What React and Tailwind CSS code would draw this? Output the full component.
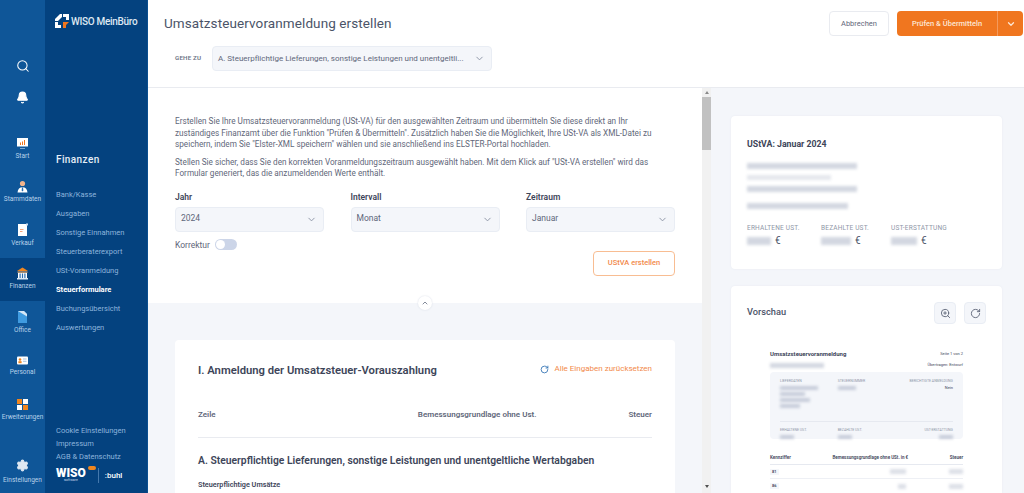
import { Search, Bell, ChevronDown, ChevronUp, ZoomIn, RotateCw, Settings } from 'lucide-react';

const railItems = [
  { label: 'Start', icon: 'start' },
  { label: 'Stammdaten', icon: 'person' },
  { label: 'Verkauf', icon: 'doc' },
  { label: 'Finanzen', icon: 'bank', active: true },
  { label: 'Office', icon: 'office' },
  { label: 'Personal', icon: 'card' },
  { label: 'Erweiterungen', icon: 'grid' },
];

const financeLinks = [
  'Bank/Kasse',
  'Ausgaben',
  'Sonstige Einnahmen',
  'Steuerberaterexport',
  'USt-Voranmeldung',
  'Steuerformulare',
  'Buchungsübersicht',
  'Auswertungen',
];

const RailIcon = ({ type }) => {
  if (type === 'start') {
    return (
      <svg width="13" height="13" viewBox="0 0 13 13">
        <rect x="1" y="1" width="11" height="8.5" fill="#fff" />
        <rect x="4" y="5.5" width="1" height="2.5" fill="#f0761f" />
        <rect x="6" y="4.5" width="1" height="3.5" fill="#f0761f" />
        <rect x="8" y="3" width="1" height="5" fill="#f0761f" />
        <rect x="4" y="11" width="5" height="1" fill="#7fa6cf" />
      </svg>
    );
  }
  if (type === 'person') {
    return (
      <svg width="13" height="13" viewBox="0 0 13 13">
        <circle cx="6.5" cy="3.5" r="2.6" fill="#f2b48c" />
        <path d="M1.5 12.5c.3-3.6 2.2-5.3 5-5.3s4.7 1.700 5 5.300z" fill="#fff" />
        <path d="M6 7.500h1l.4 3-.9 1-.9-1z" fill="#2a6db0" />
      </svg>
    );
  }
  if (type === 'doc') {
    return (
      <svg width="13" height="14" viewBox="0 0 13 14">
        <path d="M2 1h8l1 1v11H2z" fill="#fff" />
        <rect x="10" y="0.500" width="2" height="2" fill="#cfe0f2" />
        <rect x="4" y="6" width="3.500" height="1" fill="#f4a27a" />
        <rect x="4" y="8" width="2.500" height="1" fill="#f4a27a" />
      </svg>
    );
  }
  if (type === 'bank') {
    return (
      <svg width="13" height="13" viewBox="0 0 13 13">
        <path d="M6.500 0.500 12 4H1z" fill="#f0861f" />
        <rect x="1.500" y="4.500" width="10" height="1.200" fill="#f0b070" />
        <rect x="2" y="6" width="9" height="5" fill="#fff" />
        <rect x="3.500" y="6.500" width="1.200" height="4.500" fill="#2a6db0" />
        <rect x="5.900" y="6.500" width="1.200" height="4.500" fill="#2a6db0" />
        <rect x="8.300" y="6.500" width="1.200" height="4.500" fill="#2a6db0" />
        <rect x="1" y="11" width="11" height="1.500" fill="#dce8f4" />
      </svg>
    );
  }
  if (type === 'office') {
    return (
      <svg width="13" height="14" viewBox="0 0 13 14">
        <path d="M2 1h6l3 3v9H2z" fill="#3f9be0" />
        <path d="M2 1h6l3 3v2.500z" fill="#d6e7f6" />
      </svg>
    );
  }
  if (type === 'card') {
    return (
      <svg width="13" height="11" viewBox="0 0 13 11">
        <rect x="1" y="1.500" width="11" height="8" rx="1" fill="#fff" />
        <circle cx="4" cy="4.500" r="1.300" fill="#f0861f" />
        <rect x="2.400" y="6.200" width="3.200" height="2" fill="#f0861f" />
        <rect x="7" y="3.500" width="3.500" height="1" fill="#a9c4e0" />
        <rect x="7" y="5.800" width="3.500" height="1" fill="#a9c4e0" />
      </svg>
    );
  }
  return (
    <svg width="13" height="13" viewBox="0 0 13 13">
      <rect x="1" y="1" width="5" height="5" fill="#f0861f" />
      <rect x="7" y="1" width="5" height="5" fill="#fff" />
      <rect x="1" y="7" width="5" height="5" fill="#fff" />
      <rect x="7" y="7" width="5" height="5" fill="#f0861f" />
    </svg>
  );
};

const BrandMark = () => (
  <svg width="14" height="14" viewBox="0 0 14 14">
    <path d="M0 5 5 0h2v3L3 7H0z" fill="#fff" />
    <path d="M8 0h6v6h-3V3H8z" fill="#fff" />
    <path d="M0 8h3v3h3v3H0z" fill="#fff" />
    <path d="M8 8h6l-3 3v3H8z" fill="#f0761f" />
  </svg>
);

const Redacted = ({ className }) => <div className={`bg-[#a9b1c4] blur-[1.5px] ${className}`} />;

const SelectBox = ({ value, className = '' }) => (
  <div className={`flex h-[25px] items-center justify-between rounded-sm border border-[#e9edf4] bg-[#f4f6fa] pl-[5px] pr-[6px] text-[#5f677a] ${className}`}>
    <span className="whitespace-nowrap">{value}</span>
    <ChevronDown size={11} className="ml-2 shrink-0 text-[#8a92a3]" />
  </div>
);

const Field = ({ label, value }) => (
  <div className="w-[149px]">
    <div className="mb-[4px] mt-[1px] text-[8.500px] font-semibold leading-[11px] text-[#3d4559]">{label}</div>
    <SelectBox value={value} className="text-[8.500px]" />
  </div>
);

const Stat = ({ label, barWidth, className }) => (
  <div className={className}>
    <div className="text-[6.500px] leading-[10px] tracking-[0.2px] text-[#8f97a8]">{label}</div>
    <div className="mt-[3px] flex items-center gap-[4px] text-[10px] leading-[10px] text-[#4b5468]">
      <Redacted className={`h-[8px] opacity-50 ${barWidth}`} />
      €
    </div>
  </div>
);

const PreviewDoc = () => (
  <div className="ml-[39px] w-[193px] text-[#3d4559]">
    <div className="flex items-center justify-between">
      <span className="text-[6px] font-bold leading-[8px]">Umsatzsteuervoranmeldung</span>
      <span className="text-[4px] leading-[8px]">Seite 1 von 2</span>
    </div>
    <div className="mt-[3px] flex items-center justify-between">
      <Redacted className="h-[5px] w-[54px] opacity-50" />
      <span className="text-[4px] leading-[8px]">Übertragen: Entwurf</span>
    </div>
    <div className="mt-[3px] h-[67px] rounded-sm bg-[#f4f6fa] px-[10px] pt-[7px]">
      <div className="grid h-[43px] grid-cols-3 border-b border-[#e6e9f0] text-[3.500px] leading-[5px] text-[#8f97a8]">
        <div>
          LIEFERDATEN
          <Redacted className="mt-[2px] h-[4px] w-[38px] opacity-60" />
          <Redacted className="mt-[2px] h-[4px] w-[25px] opacity-60" />
          <Redacted className="mt-[2px] h-[4px] w-[30px] opacity-60" />
          <Redacted className="mt-[2px] h-[4px] w-[20px] opacity-60" />
        </div>
        <div>
          STEUERNUMMER
          <Redacted className="mt-[2px] h-[4px] w-[18px] opacity-60" />
        </div>
        <div className="text-right">
          BERICHTIGTE ANMELDUNG
          <div className="mt-[1px] text-[4px] text-[#3d4559]">Nein</div>
        </div>
      </div>
      <div className="grid grid-cols-3 pt-[6px] text-[3.500px] leading-[5px] text-[#8f97a8]">
        <div>
          ERHALTENE UST.
          <Redacted className="mt-[2px] h-[4px] w-[14px] opacity-60" />
        </div>
        <div>
          BEZAHLTE UST.
          <Redacted className="mt-[2px] h-[4px] w-[14px] opacity-60" />
        </div>
        <div className="flex flex-col items-end">
          UST-ERSTATTUNG
          <Redacted className="mt-[2px] h-[4px] w-[14px] opacity-60" />
        </div>
      </div>
    </div>
    <div className="mt-[15px] flex justify-between border-b border-[#e6e9f0] pb-[2px] text-[4.500px] font-semibold leading-[8px]">
      <span>Kennziffer</span>
      <span>Bemessungsgrundlage ohne USt. in €</span>
      <span>Steuer</span>
    </div>
    <div className="flex h-[14px] items-center justify-between border-b border-[#eef0f5]">
      <span className="bg-[#f4f6fa] px-[2px] text-[4px] font-semibold">81</span>
      <Redacted className="ml-[68px] h-[5px] w-[16px] opacity-40" />
      <Redacted className="h-[5px] w-[14px] opacity-40" />
    </div>
    <div className="flex h-[14px] items-center justify-between">
      <span className="bg-[#f4f6fa] px-[2px] text-[4px] font-semibold">86</span>
      <Redacted className="ml-[76px] h-[5px] w-[8px] opacity-40" />
      <Redacted className="h-[5px] w-[14px] opacity-40" />
    </div>
  </div>
);

const App = () => {
  return (
    <div className="flex h-screen overflow-hidden bg-white font-['Roboto',sans-serif] text-[#4b5468]">
      {/* icon rail */}
      <aside className="flex w-[45px] shrink-0 flex-col items-center bg-[#0f5698] text-[#b9d2ea]">
        <Search size={14} strokeWidth={1.800} className="mt-[59px] text-white" />
        <Bell size={13} fill="#fff" className="mt-[18px] text-white" />
        <nav className="mt-[23px] flex w-full flex-col">
          {railItems.map((item) => (
            <div
              key={item.label}
              className={`flex h-[43.500px] flex-col items-center justify-center gap-[1px] ${item.active ? 'bg-[#04427f]' : ''}`}
            >
              <RailIcon type={item.icon} />
              <span className="whitespace-nowrap text-[6.500px] leading-[10px]">{item.label}</span>
            </div>
          ))}
        </nav>
        <div className="mt-auto flex flex-col items-center pb-[8px]">
          <Settings size={13} fill="#dfe8f2" className="text-[#dfe8f2]" />
          <span className="mt-[3px] whitespace-nowrap text-[6.500px] leading-[10px]">Einstellungen</span>
        </div>
      </aside>

      {/* section sidebar */}
      <aside className="flex w-[103px] shrink-0 flex-col border-r-[1px] border-[#0b4f90] bg-[#04427f] pl-[11px] text-[#8db4dc]">
        <div className="-ml-px mt-[14px] flex h-[14px] items-center gap-[2px]">
          <BrandMark />
          <span className="whitespace-nowrap text-[10px] font-medium tracking-[-0.3px] text-[#dfe8f2]">WISO MeinBüro</span>
        </div>
        <div className="mt-[124px] text-[10px] font-medium leading-[16px] tracking-[0.4px] text-[#e6eef7]">Finanzen</div>
        <ul className="mt-[17px] flex flex-col">
          {financeLinks.map((link) => (
            <li
              key={link}
              className={`whitespace-nowrap text-[7.500px] leading-[19px] ${link === 'Steuerformulare' ? 'font-bold text-white' : ''}`}
            >
              {link}
            </li>
          ))}
        </ul>
        <div className="mt-auto text-[7.500px] leading-[13px]">
          <div>Cookie Einstellungen</div>
          <div>Impressum</div>
          <div>AGB &amp; Datenschutz</div>
        </div>
        <div className="mb-[9px] mt-[4px] flex h-[17px] items-center text-white">
          <div className="relative flex flex-col items-center leading-none">
            <span className="text-[12px] font-black leading-[10px]">WISO</span>
            <span className="text-[3.500px] leading-[5px] text-[#c9dbee]">software</span>
            <span className="absolute left-[32px] top-[-2px] h-[4px] w-[8px] rounded-sm bg-[#f0861f]" />
          </div>
          <span className="ml-[12px] mr-[6px] h-[15px] w-px bg-[#4478ad]" />
          <span className="text-[8px] font-medium">:buhl</span>
        </div>
      </aside>

      {/* main */}
      <main className="flex min-w-0 flex-1 flex-col">
        <header className="h-[88px] shrink-0 border-b border-[#e9ebf0] bg-white pl-[16px] pr-[1px]">
          <div className="flex items-start justify-between pt-[11px]">
            <h1 className="mt-[2px] text-[13.500px] leading-[20px] tracking-[0.1px] text-[#4b5468]">Umsatzsteuervoranmeldung erstellen</h1>
            <div className="flex gap-[8px]">
              <button className="h-[25px] w-[60px] rounded-sm border border-[#e9ebf0] bg-white text-[7.500px] text-[#5f677a]">Abbrechen</button>
              <div className="flex h-[25px] w-[126px] items-center rounded-sm bg-[#f0761f] text-[7.500px] font-medium text-[#fde6d4]">
                <span className="w-[101px] border-r border-[#f49a5c] text-center leading-[25px]">Prüfen &amp; Übermitteln</span>
                <ChevronDown size={10} strokeWidth={3} className="ml-[8px]" />
              </div>
            </div>
          </div>
          <div className="mt-[10px] flex items-center pl-[11px]">
            <span className="w-[37px] text-[6.200px] font-semibold tracking-[0.2px] text-[#6b7385]">GEHE ZU</span>
            <SelectBox value="A. Steuerpflichtige Lieferungen, sonstige Leistungen und unentgeltli..." className="w-[280px] text-[8px]" />
          </div>
        </header>

        <div className="flex min-h-0 flex-1">
          {/* form column */}
          <section className="flex min-w-0 flex-1 flex-col overflow-hidden bg-[#f4f6fa]">
            <div className="relative h-[215px] shrink-0 bg-white pl-[27px] pr-[27px] pt-[28px] text-[8.200px] leading-[11.500px] text-[#5f677a]">
              <p className="whitespace-nowrap">
                Erstellen Sie Ihre Umsatzsteuervoranmeldung (USt-VA) für den ausgewählten Zeitraum und übermitteln Sie diese direkt an Ihr
                <br />
                zuständiges Finanzamt über die Funktion "Prüfen &amp; Übermitteln". Zusätzlich haben Sie die Möglichkeit, Ihre USt-VA als XML-Datei zu
                <br />
                speichern, indem Sie "Elster-XML speichern" wählen und sie anschließend ins ELSTER-Portal hochladen.
              </p>
              <p className="mt-[6px] whitespace-nowrap">
                Stellen Sie sicher, dass Sie den korrekten Voranmeldungszeitraum ausgewählt haben. Mit dem Klick auf "USt-VA erstellen" wird das
                <br />
                Formular generiert, das die anzumeldenden Werte enthält.
              </p>
              <div className="mt-[11px] flex justify-between">
                <Field label="Jahr" value="2024" />
                <Field label="Intervall" value="Monat" />
                <Field label="Zeitraum" value="Januar" />
              </div>
              <div className="mt-[7px] flex items-center gap-[5px] text-[8.500px] leading-[12px]">
                Korrektur
                <span className="flex h-[11px] w-[22px] items-center rounded-full bg-[#ccd5e8] pl-px">
                  <span className="h-[9px] w-[9px] rounded-full bg-white" />
                </span>
              </div>
              <div className="flex justify-end">
                <button className="h-[25px] w-[82px] rounded-sm border border-[#f8bd92] bg-white text-[7.500px] font-medium text-[#f28a4b]">UStVA erstellen</button>
              </div>
              <span className="absolute bottom-[-7px] left-[270px] flex h-[14px] w-[14px] items-center justify-center rounded-full bg-white shadow-[0_0_2px_#d7dbe5]">
                <ChevronUp size={8} strokeWidth={2.500} className="text-[#6b7385]" />
              </span>
            </div>

            <div className="mx-[27px] mt-[37px] flex-1 rounded-t-sm bg-white px-[23px] pt-[23px]">
              <div className="flex items-center justify-between">
                <h2 className="text-[11.250px] font-semibold leading-[16px] text-[#3d4559]">I. Anmeldung der Umsatzsteuer-Vorauszahlung</h2>
                <span className="mb-[4px] flex items-center gap-[5px] text-[8px] text-[#f28a4b]">
                  <RotateCw size={9} strokeWidth={2.200} className="text-[#2a6db0]" />
                  Alle Eingaben zurücksetzen
                </span>
              </div>
              <div className="mt-[30px] flex border-b border-[#e9ebf0] pb-[16px] text-[8px] font-semibold leading-[12px] text-[#5f677a]">
                <span>Zeile</span>
                <span className="ml-auto">Bemessungsgrundlage ohne Ust.</span>
                <span className="ml-[92px]">Steuer</span>
              </div>
              <h3 className="mt-[16px] whitespace-nowrap text-[10.350px] font-semibold leading-[14px] text-[#3d4559]">
                A. Steuerpflichtige Lieferungen, sonstige Leistungen und unentgeltliche Wertabgaben
              </h3>
              <div className="mt-[11px] text-[7.250px] font-semibold leading-[12px] text-[#3d4559]">Steuerpflichtige Umsätze</div>
            </div>
          </section>

          {/* scrollbar */}
          <div className="flex w-[9px] shrink-0 flex-col items-center bg-[#f1f1f1]">
            <span className="mt-[3px] h-0 w-0 border-x-[2px] border-b-[3px] border-x-transparent border-b-[#8a8a8a]" />
            <span className="mt-[3px] h-[53px] w-full bg-[#c1c1c1]" />
            <span className="mb-[5px] mt-auto h-0 w-0 border-x-[2px] border-t-[3px] border-x-transparent border-t-[#505050]" />
          </div>

          {/* summary column */}
          <section className="flex w-[313px] shrink-0 flex-col overflow-hidden bg-[#f4f6fa] pl-[20px] pr-[22px] pt-[28px]">
            <div className="h-[153px] shrink-0 rounded-sm bg-white px-[16px] pt-[21px] shadow-[0_0_2px_#e6e9f0]">
              <div className="text-[8.750px] font-bold leading-[14px] text-[#3d4559]">UStVA: Januar 2024</div>
              <Redacted className="mt-[12px] h-[6px] w-[110px] opacity-50" />
              <Redacted className="mt-[6px] h-[5px] w-[84px] opacity-30" />
              <Redacted className="mt-[6px] h-[6px] w-[110px] opacity-50" />
              <Redacted className="mt-[11px] h-[6px] w-[101px] opacity-50" />
              <div className="mt-[14px] flex">
                <Stat label="ERHALTENE UST." barWidth="w-[24px]" className="w-[74px]" />
                <Stat label="BEZAHLTE UST." barWidth="w-[30px]" className="w-[70px]" />
                <Stat label="UST-ERSTATTUNG" barWidth="w-[26px]" className="" />
              </div>
            </div>
            <div className="mt-[17px] flex-1 rounded-t-sm bg-white pt-[16px] shadow-[0_0_2px_#e6e9f0]">
              <div className="flex items-start justify-between pl-[16px] pr-[16px]">
                <span className="mt-[2px] text-[9.250px] font-medium leading-[16px] text-[#4b5468]">Vorschau</span>
                <div className="flex gap-[8px]">
                  <span className="flex h-[22px] w-[22px] items-center justify-center rounded-sm border border-[#e9edf4] bg-[#f4f6fa]">
                    <ZoomIn size={11} className="text-[#5f677a]" />
                  </span>
                  <span className="flex h-[22px] w-[22px] items-center justify-center rounded-sm border border-[#e9edf4] bg-[#f4f6fa]">
                    <RotateCw size={11} className="text-[#5f677a]" />
                  </span>
                </div>
              </div>
              <div className="mt-[26px]">
                <PreviewDoc />
              </div>
            </div>
          </section>
        </div>
      </main>
    </div>
  );
};

export default App;
